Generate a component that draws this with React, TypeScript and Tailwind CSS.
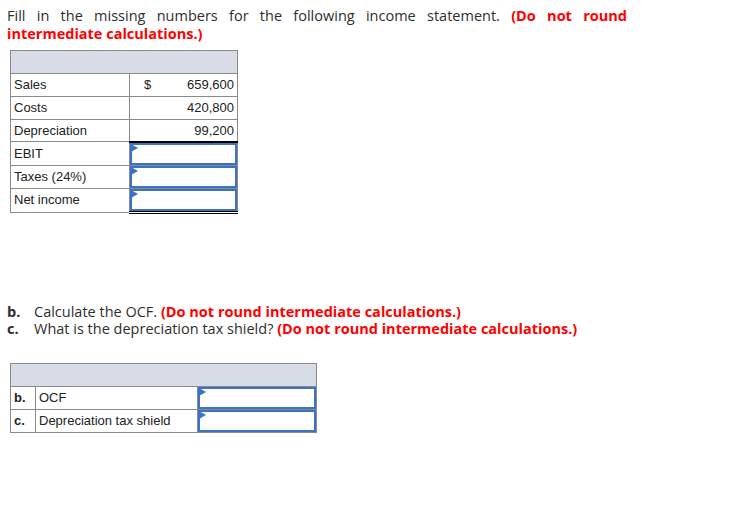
import React from "react";

type Row = {
  label: string;
  value?: string;
  dollar?: boolean;
  input?: boolean;
  underline?: boolean;
  double?: boolean;
};

const rows: Row[] = [
  { label: "Sales", value: "659,600", dollar: true },
  { label: "Costs", value: "420,800" },
  { label: "Depreciation", value: "99,200", underline: true },
  { label: "EBIT", input: true },
  { label: "Taxes (24%)", input: true },
  { label: "Net income", input: true, double: true },
];

function InputBox() {
  return (
    <div className="relative h-[22px] w-full border-2 border-[#3c72c4] bg-white">
      <span className="absolute -left-[1px] -top-[1px] h-0 w-0 border-y-[4px] border-l-[7px] border-y-transparent border-l-[#3c72c4]" />
    </div>
  );
}

export default function App() {
  return (
    <div
      className="min-h-screen bg-white pl-[7px] pt-[7px] text-[#2e2e2e]"
      style={{ fontFamily: "'Open Sans', Lato, sans-serif" }}
    >
      <p className="w-[620px] text-justify text-[14.5px] leading-[18px]">
        Fill in the missing numbers for the following income statement.{" "}
        <b className="font-bold text-[#ff0000]">
          (Do not round intermediate calculations.)
        </b>
      </p>

      <table
        className="ml-[3px] mt-[7px] border-collapse text-[13px] text-[#222]"
        style={{ fontFamily: "'Liberation Sans', Arial, sans-serif" }}
      >
        <thead>
          <tr>
            <th colSpan={2} className="h-[23px] border border-[#8a8a8a] bg-[#d8dce6] p-0" />
          </tr>
        </thead>
        <tbody>
          {rows.map((r) => (
            <tr key={r.label} className={r.underline ? "h-[22px]" : "h-[23px]"}>
              <td className="w-[119px] border border-[#8a8a8a] px-[3px] py-0">{r.label}</td>
              {r.input ? (
                <td
                  className={
                    "w-[108px] border border-[#8a8a8a] p-0 " +
                    (r.double ? "border-b-[3px] border-b-black border-double" : "")
                  }
                >
                  <InputBox />
                </td>
              ) : (
                <td
                  className={
                    "w-[108px] border border-[#8a8a8a] px-[3px] py-0 " +
                    (r.underline ? "border-b-2 border-b-black" : "")
                  }
                >
                  <div className="flex justify-between">
                    <span className="pl-[11px]">{r.dollar ? "$" : ""}</span>
                    <span>{r.value}</span>
                  </div>
                </td>
              )}
            </tr>
          ))}
        </tbody>
      </table>

      <div className="mt-[89px] text-[14.5px] leading-[17px]">
        <div className="flex">
          <span className="w-[27px] font-bold">b.</span>
          <span>
            Calculate the OCF.{" "}
            <b className="font-bold text-[#ff0000]">(Do not round intermediate calculations.)</b>
          </span>
        </div>
        <div className="flex">
          <span className="w-[27px] font-bold">c.</span>
          <span>
            What is the depreciation tax shield?{" "}
            <b className="font-bold text-[#ff0000]">(Do not round intermediate calculations.)</b>
          </span>
        </div>
      </div>

      <table
        className="ml-[3px] mt-[26px] border-collapse text-[13px] text-[#222]"
        style={{ fontFamily: "'Liberation Sans', Arial, sans-serif" }}
      >
        <thead>
          <tr>
            <th colSpan={3} className="h-[23px] border border-[#8a8a8a] bg-[#d8dce6] p-0" />
          </tr>
        </thead>
        <tbody>
          <tr className="h-[23px]">
            <td className="w-[25px] border border-[#8a8a8a] px-[3px] py-0 font-bold">b.</td>
            <td className="w-[162px] border border-[#8a8a8a] px-[3px] py-0">OCF</td>
            <td className="w-[119px] border border-[#8a8a8a] p-0">
              <InputBox />
            </td>
          </tr>
          <tr className="h-[23px]">
            <td className="w-[25px] border border-[#8a8a8a] px-[3px] py-0 font-bold">c.</td>
            <td className="w-[162px] border border-[#8a8a8a] px-[3px] py-0">Depreciation tax shield</td>
            <td className="w-[119px] border border-[#8a8a8a] p-0">
              <InputBox />
            </td>
          </tr>
        </tbody>
      </table>
    </div>
  );
}
